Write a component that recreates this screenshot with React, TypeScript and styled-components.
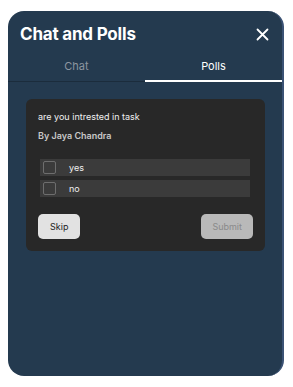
import styled, { createGlobalStyle } from "styled-components";

const Global = createGlobalStyle`
  body {
    margin: 0;
    background: #ffffff;
    font-family: Inter, "Liberation Sans", sans-serif;
  }
`;

const Page = styled.div`
  width: 293px;
  height: 387px;
  padding: 11px 9px 11px 8px;
  box-sizing: border-box;
`;

const Panel = styled.div`
  height: 365px;
  background-color: #243a4f;
  border-radius: 16px;
  border-right: 2px solid #3b5274;
  display: flex;
  flex-direction: column;
  overflow: hidden;
  color: #ffffff;
`;

const Header = styled.div`
  display: flex;
  justify-content: space-between;
  align-items: center;
  padding: 12px 13px 0 12px;
  height: 22px;
`;

const Title = styled.div`
  font-weight: 700;
  font-size: 17px;
  letter-spacing: -0.2px;
`;

const Close = styled.button`
  background: none;
  border: none;
  padding: 0;
  color: #ffffff;
  display: flex;
  cursor: pointer;
`;

const Tabs = styled.div`
  display: flex;
  margin-top: 11px;
  border-bottom: 1px solid #1b2c3c;
`;

const Tab = styled.div<{ $active?: boolean }>`
  flex: 1;
  text-align: center;
  font-size: 11px;
  padding: 3px 0 7px;
  color: ${(p) => (p.$active ? "#ffffff" : "#8d96a0")};
  border-bottom: 2px solid ${(p) => (p.$active ? "#ffffff" : "transparent")};
  margin-bottom: -1px;
`;

const Body = styled.div`
  padding: 17px 17px 0 18px;
`;

const Card = styled.div`
  background-color: #282828;
  border-radius: 6px;
  padding: 12px 12px 12px 12px;
`;

const Question = styled.div`
  font-size: 9px;
  color: #f0f0f0;
`;

const Author = styled.div`
  font-size: 9px;
  font-weight: 600;
  color: #c8c8c8;
  margin-top: 8px;
`;

const Options = styled.div`
  display: flex;
  flex-direction: column;
  gap: 4px;
  margin: 18px 3px 0 2px;
`;

const Option = styled.label`
  display: flex;
  align-items: center;
  height: 17px;
  background-color: #3b3b3b;
  padding-left: 3px;
  font-size: 9px;
  color: #f0f0f0;
`;

const Box = styled.span`
  width: 13px;
  height: 13px;
  border: 1px solid #6e6e6e;
  border-radius: 2px;
  margin-right: 13px;
  box-sizing: border-box;
`;

const Actions = styled.div`
  display: flex;
  justify-content: space-between;
  margin-top: 17px;
`;

const Button = styled.button<{ $disabled?: boolean }>`
  height: 25px;
  padding: 0 ${(p) => (p.$disabled ? "11px" : "12px")};
  border: none;
  border-radius: 5px;
  font-family: inherit;
  font-size: 9px;
  background-color: ${(p) => (p.$disabled ? "#b9b9b9" : "#e2e2e2")};
  color: ${(p) => (p.$disabled ? "#8a8a8a" : "#222222")};
`;

export default function App() {
  return (
    <>
      <Global />
      <Page>
        <Panel>
          <Header>
            <Title>Chat and Polls</Title>
            <Close aria-label="close">
              <svg width="13" height="13" viewBox="0 0 13 13">
                <path d="M1.5 1.5L11.5 11.5M11.5 1.5L1.5 11.5" stroke="#fff" strokeWidth="1.8" strokeLinecap="round" />
              </svg>
            </Close>
          </Header>
          <Tabs>
            <Tab>Chat</Tab>
            <Tab $active>Polls</Tab>
          </Tabs>
          <Body>
            <Card>
              <Question>are you intrested in task</Question>
              <Author>By Jaya Chandra</Author>
              <Options>
                <Option>
                  <Box />
                  yes
                </Option>
                <Option>
                  <Box />
                  no
                </Option>
              </Options>
              <Actions>
                <Button>Skip</Button>
                <Button $disabled>Submit</Button>
              </Actions>
            </Card>
          </Body>
        </Panel>
      </Page>
    </>
  );
}
